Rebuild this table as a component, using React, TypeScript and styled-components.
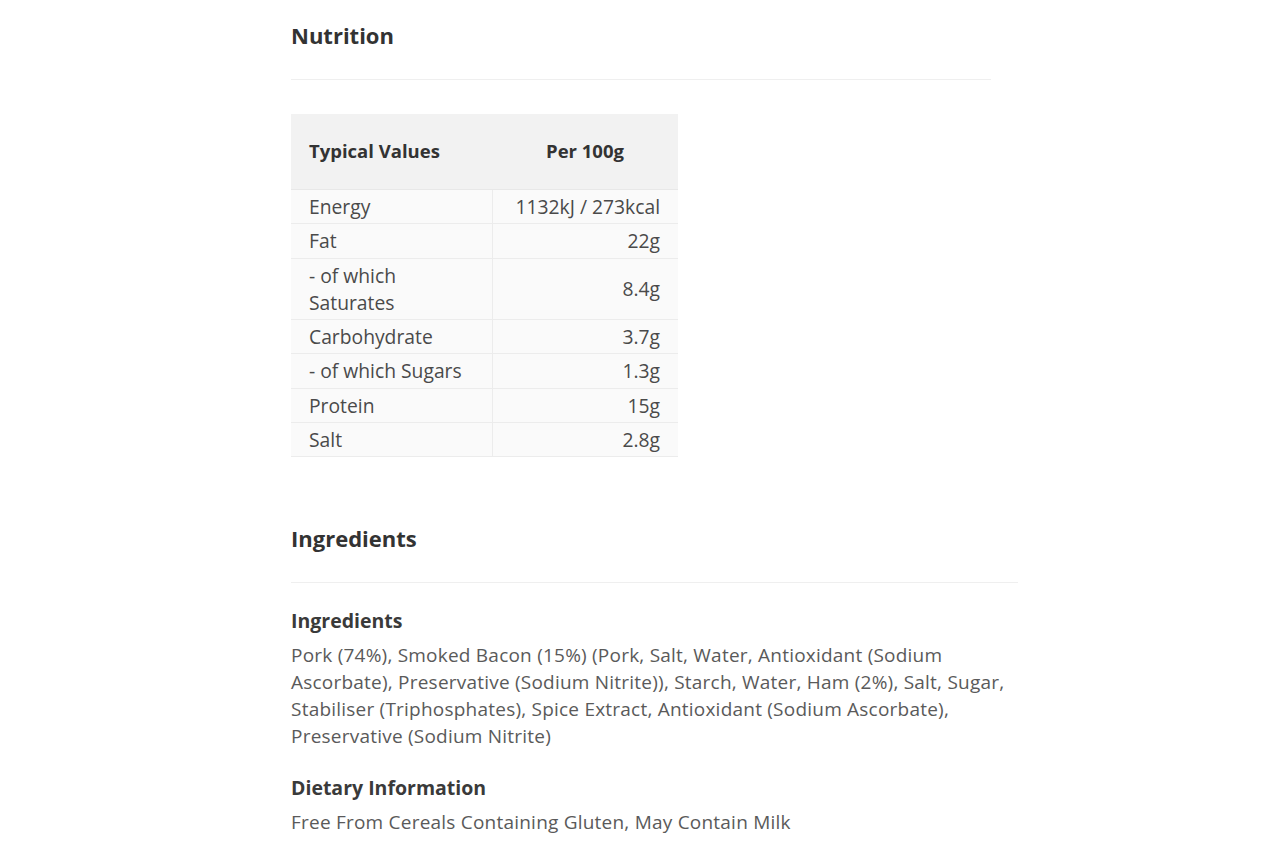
import React from "react";
import styled, { createGlobalStyle } from "styled-components";

const GlobalStyle = createGlobalStyle`
  html, body { margin: 0; padding: 0; background: #ffffff; }
  body { font-family: "Open Sans", "Liberation Sans", sans-serif; color: #444; }
`;

const Page = styled.main`
  padding: 0 0 40px 291px;
`;

const Section = styled.section<{ $width: number }>`
  width: ${(p) => p.$width}px;
`;

const SectionTitle = styled.h2`
  margin: 0;
  padding: 22px 0 31px;
  font-size: 22px;
  line-height: 26px;
  font-weight: 700;
  color: #333;
  border-bottom: 1px solid #efefef;
`;

const Table = styled.table`
  margin-top: 34px;
  width: 387px;
  border-collapse: collapse;
  color: #444;
`;

const HeadCell = styled.th<{ $align: "left" | "center" }>`
  background: #f2f2f2;
  font-size: 18.5px;
  font-weight: 700;
  text-align: ${(p) => p.$align};
  padding: 24px 18px 25px;
  line-height: 26px;
  color: #333;
  border-bottom: 1px solid #e8e8e8;
`;

const Cell = styled.td<{ $num?: boolean }>`
  background: #fafafa;
  font-size: 19.3px;
  padding: 3px 18px;
  line-height: 27.3px;
  text-align: ${(p) => (p.$num ? "right" : "left")};
  border-bottom: 1px solid #ececec;
  width: ${(p) => (p.$num ? "186px" : "201px")};
  box-sizing: border-box;
  color: #4a4a4a;
  & + & { border-left: 1px solid #ececec; }
`;

const SubTitle = styled.h3`
  margin: 26px 0 9px;
  font-size: 19.5px;
  line-height: 24px;
  font-weight: 700;
  color: #3a3a3a;
`;

const Text = styled.p`
  margin: 0;
  font-size: 19px;
  letter-spacing: 0.22px;
  line-height: 27px;
  color: #5a5a5a;
`;

const Spacer = styled.div`
  height: 46px;
`;

const rows: [React.ReactNode, string][] = [
  ["Energy", "1132kJ / 273kcal"],
  ["Fat", "22g"],
  [<>- of which<br />Saturates</>, "8.4g"],
  ["Carbohydrate", "3.7g"],
  ["- of which Sugars", "1.3g"],
  ["Protein", "15g"],
  ["Salt", "2.8g"],
];

export default function App() {
  return (
    <>
      <GlobalStyle />
      <Page>
        <Section $width={700}>
          <SectionTitle>Nutrition</SectionTitle>
          <Table>
            <thead>
              <tr>
                <HeadCell $align="left">Typical Values</HeadCell>
                <HeadCell $align="center">Per 100g</HeadCell>
              </tr>
            </thead>
            <tbody>
              {rows.map(([label, value], i) => (
                <tr key={i}>
                  <Cell>{label}</Cell>
                  <Cell $num>{value}</Cell>
                </tr>
              ))}
            </tbody>
          </Table>
        </Section>
        <Spacer />
        <Section $width={727}>
          <SectionTitle>Ingredients</SectionTitle>
          <SubTitle>Ingredients</SubTitle>
          <Text>
            Pork (74%), Smoked Bacon (15%) (Pork, Salt, Water, Antioxidant (Sodium Ascorbate), Preservative (Sodium Nitrite)), Starch, Water, Ham (2%), Salt, Sugar, Stabiliser (Triphosphates), Spice Extract, Antioxidant (Sodium Ascorbate), Preservative (Sodium Nitrite)
          </Text>
          <SubTitle>Dietary Information</SubTitle>
          <Text>Free From Cereals Containing Gluten, May Contain Milk</Text>
        </Section>
      </Page>
    </>
  );
}
